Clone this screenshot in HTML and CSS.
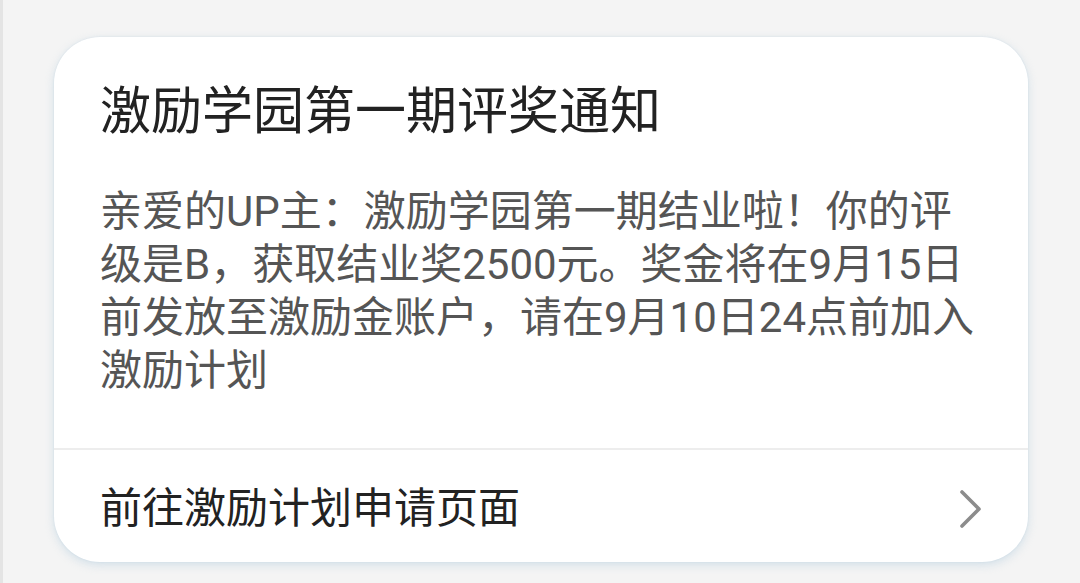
FILE: index.html
```html
<!DOCTYPE html>
<html lang="zh-CN">
<head>
<meta charset="utf-8">
<link rel="stylesheet" href="styles.css">
</head>
<body>
<div class="edge"></div>
<div class="card">
  <div class="main">
    <h1 class="title">激励学园第一期评奖通知</h1>
    <p class="content">亲爱的UP主：激励学园第一期结业啦！你的评级是B，获取结业奖2500元。奖金将在9月15日前发放至激励金账户，请在9月10日24点前加入激励计划</p>
  </div>
  <div class="link">
    <span class="link-text">前往激励计划申请页面</span>
    <svg class="chev" width="24" height="40" viewBox="0 0 24 40"><polyline points="4,3 21,20 4,37" fill="none" stroke="#8c8c8c" stroke-width="3.6" stroke-linecap="round" stroke-linejoin="round"/></svg>
  </div>
</div>
</body>
</html>
```
FILE: styles.css
```css
html, body {
  margin: 0;
  padding: 0;
  background: #f4f4f4;
  width: 1080px;
  height: 583px;
  overflow: hidden;
  font-family: "Roboto", "Noto Sans CJK SC", sans-serif;
}
body {
  position: relative;
  padding-top: 37px;
  box-sizing: border-box;
}
.edge {
  position: absolute;
  left: 0;
  top: 0;
  width: 3px;
  height: 583px;
  background: #e4e4e4;
}
.card {
  margin-left: 54px;
  width: 974px;
  height: 525px;
  background: #ffffff;
  border-radius: 46px;
  box-shadow: 0 3px 10px rgba(170, 200, 220, 0.45), 0 0 2px rgba(200, 215, 225, 0.6);
  display: flex;
  flex-direction: column;
  overflow: hidden;
}
.main {
  padding: 40px 46px 0 46px;
  height: 413px;
  flex: none;
  box-sizing: border-box;
  border-bottom: 2px solid #ededed;
}
.title {
  margin: 0;
  font-size: 51px;
  line-height: 70px;
  font-weight: 400;
  color: #222222;
}
.content {
  margin: 38px 0 0 0;
  font-size: 42px;
  line-height: 53px;
  color: #555555;
}
.link {
  flex: 1;
  display: flex;
  align-items: center;
  justify-content: space-between;
  padding: 6px 46px 0 46px;
}
.link-text {
  font-size: 42px;
  line-height: 56px;
  color: #222222;
}
.chev {
  display: block;
}
```
